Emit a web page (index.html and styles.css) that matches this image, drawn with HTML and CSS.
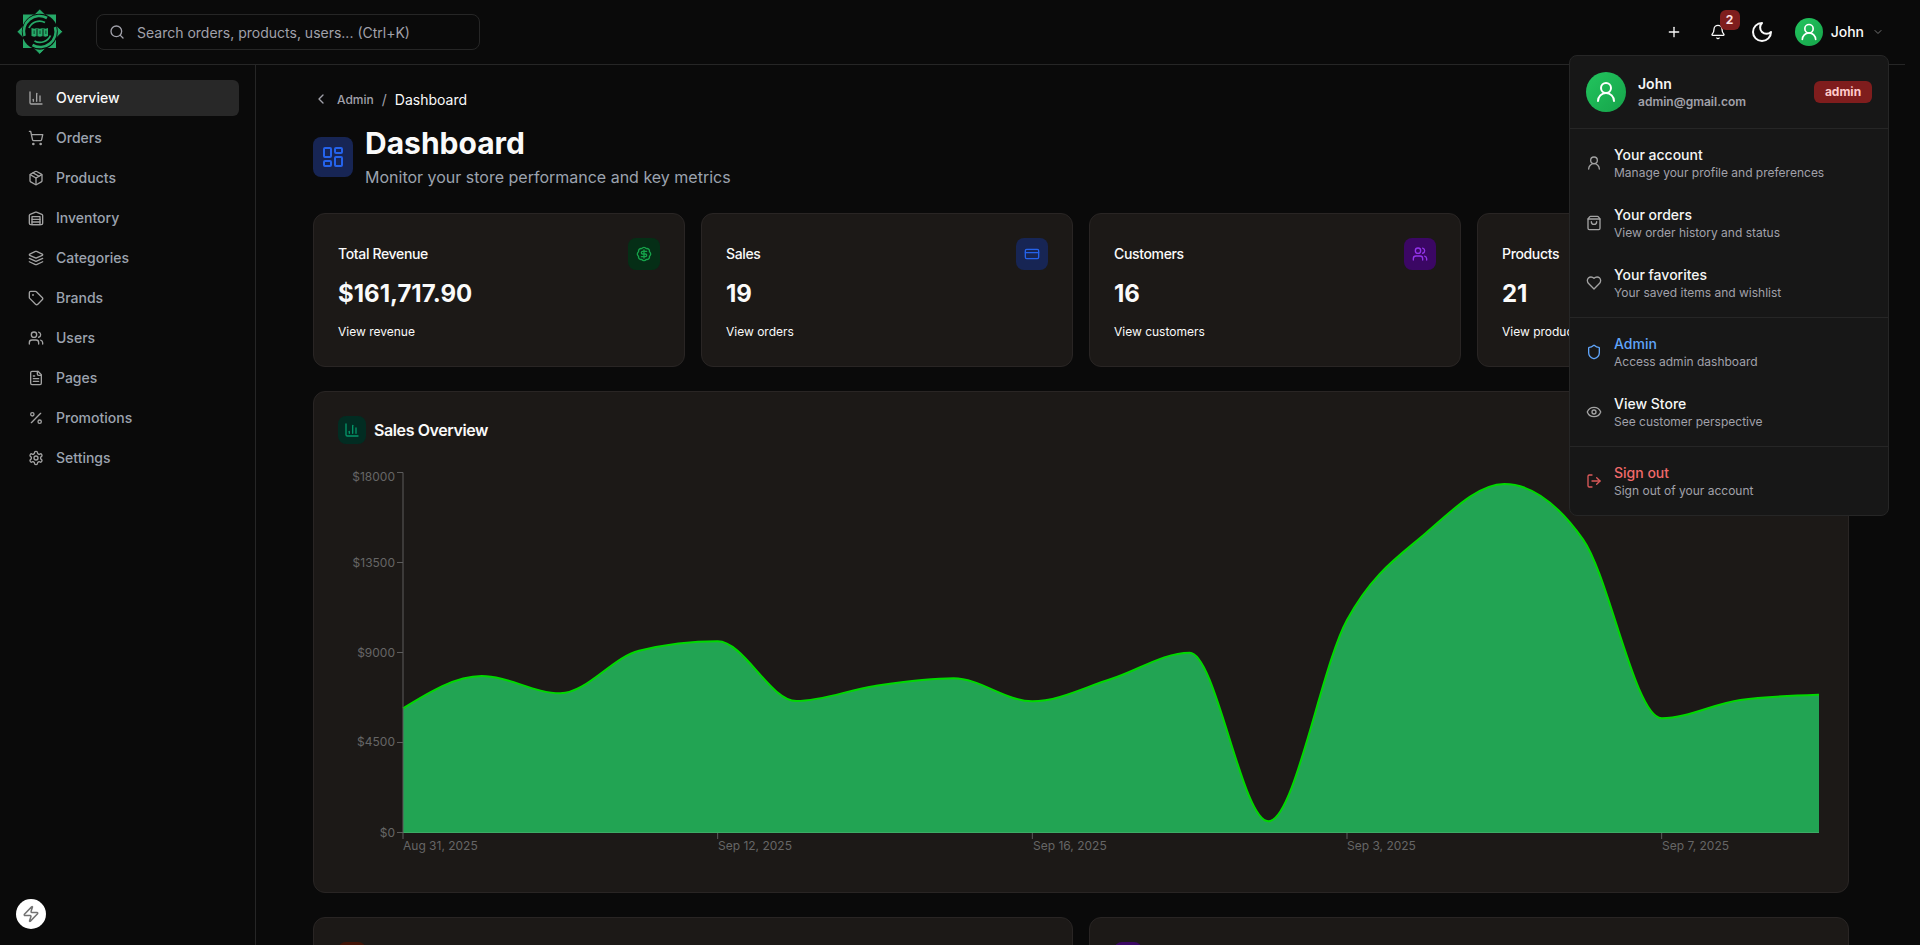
FILE: index.html
```html
<!DOCTYPE html>
<html lang="en">
<head>
    <meta charset="UTF-8">
    <meta name="viewport" content="width=device-width, initial-scale=1.0">
    <title>Dashboard</title>
    <link rel="stylesheet" href="styles.css">
</head>
<body>
    <!-- icon sprite -->
    <svg class="sprite" aria-hidden="true">
        <symbol id="i-chart" viewBox="0 0 24 24"><path d="M3 3v16a2 2 0 0 0 2 2h16"/><path d="M18 17V9"/><path d="M13 17V5"/><path d="M8 17v-3"/></symbol>
        <symbol id="i-cart" viewBox="0 0 24 24"><circle cx="8" cy="21" r="1"/><circle cx="19" cy="21" r="1"/><path d="M2.05 2.05h2l2.66 12.42a2 2 0 0 0 2 1.58h9.78a2 2 0 0 0 1.95-1.57l1.65-7.43H5.12"/></symbol>
        <symbol id="i-package" viewBox="0 0 24 24"><path d="M16.5 9.4 7.55 4.24"/><path d="M21 8a2 2 0 0 0-1-1.73l-7-4a2 2 0 0 0-2 0l-7 4A2 2 0 0 0 3 8v8a2 2 0 0 0 1 1.73l7 4a2 2 0 0 0 2 0l7-4A2 2 0 0 0 21 16Z"/><polyline points="3.29 7 12 12 20.71 7"/><line x1="12" y1="22" x2="12" y2="12"/></symbol>
        <symbol id="i-warehouse" viewBox="0 0 24 24"><path d="M22 8.35V20a2 2 0 0 1-2 2H4a2 2 0 0 1-2-2V8.35A2 2 0 0 1 3.26 6.5l8-3.2a2 2 0 0 1 1.48 0l8 3.2A2 2 0 0 1 22 8.35Z"/><path d="M6 18h12"/><path d="M6 14h12"/><rect x="6" y="10" width="12" height="12"/></symbol>
        <symbol id="i-layers" viewBox="0 0 24 24"><path d="m12.83 2.18a2 2 0 0 0-1.66 0L2.6 6.08a1 1 0 0 0 0 1.83l8.58 3.91a2 2 0 0 0 1.66 0l8.58-3.9a1 1 0 0 0 0-1.83Z"/><path d="m22 17.65-9.17 4.16a2 2 0 0 1-1.66 0L2 17.65"/><path d="m22 12.65-9.17 4.16a2 2 0 0 1-1.66 0L2 12.65"/></symbol>
        <symbol id="i-tag" viewBox="0 0 24 24"><path d="M12.586 2.586A2 2 0 0 0 11.172 2H4a2 2 0 0 0-2 2v7.172a2 2 0 0 0 .586 1.414l8.704 8.704a2.426 2.426 0 0 0 3.42 0l6.58-6.58a2.426 2.426 0 0 0 0-3.42z"/><circle cx="7.5" cy="7.5" r=".5"/></symbol>
        <symbol id="i-users" viewBox="0 0 24 24"><path d="M16 21v-2a4 4 0 0 0-4-4H6a4 4 0 0 0-4 4v2"/><circle cx="9" cy="7" r="4"/><path d="M22 21v-2a4 4 0 0 0-3-3.87"/><path d="M16 3.13a4 4 0 0 1 0 7.75"/></symbol>
        <symbol id="i-file" viewBox="0 0 24 24"><path d="M15 2H6a2 2 0 0 0-2 2v16a2 2 0 0 0 2 2h12a2 2 0 0 0 2-2V7Z"/><path d="M14 2v4a2 2 0 0 0 2 2h4"/><path d="M10 9H8"/><path d="M16 13H8"/><path d="M16 17H8"/></symbol>
        <symbol id="i-percent" viewBox="0 0 24 24"><line x1="19" y1="5" x2="5" y2="19"/><circle cx="6.5" cy="6.5" r="2.5"/><circle cx="17.5" cy="17.5" r="2.5"/></symbol>
        <symbol id="i-settings" viewBox="0 0 24 24"><path d="M12.22 2h-.44a2 2 0 0 0-2 2v.18a2 2 0 0 1-1 1.73l-.43.25a2 2 0 0 1-2 0l-.15-.08a2 2 0 0 0-2.73.73l-.22.38a2 2 0 0 0 .73 2.73l.15.1a2 2 0 0 1 1 1.72v.51a2 2 0 0 1-1 1.74l-.15.09a2 2 0 0 0-.73 2.73l.22.38a2 2 0 0 0 2.73.73l.15-.08a2 2 0 0 1 2 0l.43.25a2 2 0 0 1 1 1.73V20a2 2 0 0 0 2 2h.44a2 2 0 0 0 2-2v-.18a2 2 0 0 1 1-1.73l.43-.25a2 2 0 0 1 2 0l.15.08a2 2 0 0 0 2.73-.73l.22-.39a2 2 0 0 0-.73-2.73l-.15-.08a2 2 0 0 1-1-1.74v-.5a2 2 0 0 1 1-1.74l.15-.09a2 2 0 0 0 .73-2.73l-.22-.38a2 2 0 0 0-2.73-.73l-.15.08a2 2 0 0 1-2 0l-.43-.25a2 2 0 0 1-1-1.73V4a2 2 0 0 0-2-2z"/><circle cx="12" cy="12" r="3"/></symbol>
        <symbol id="i-search" viewBox="0 0 24 24"><circle cx="11" cy="11" r="8"/><path d="m21 21-4.3-4.3"/></symbol>
        <symbol id="i-plus" viewBox="0 0 24 24"><path d="M5 12h14"/><path d="M12 5v14"/></symbol>
        <symbol id="i-bell" viewBox="0 0 24 24"><path d="M10.268 21a2 2 0 0 0 3.464 0"/><path d="M3.262 15.326A1 1 0 0 0 4 17h16a1 1 0 0 0 .74-1.673C19.41 13.956 18 12.499 18 8A6 6 0 0 0 6 8c0 4.499-1.411 5.956-2.738 7.326"/></symbol>
        <symbol id="i-moon" viewBox="0 0 24 24"><path d="M12 3a6 6 0 0 0 9 9 9 9 0 1 1-9-9Z"/></symbol>
        <symbol id="i-user" viewBox="0 0 24 24"><circle cx="12" cy="8" r="5"/><path d="M20 21a8 8 0 0 0-16 0"/></symbol>
        <symbol id="i-bag" viewBox="0 0 24 24"><path d="M16 10a4 4 0 0 1-8 0"/><path d="M3.103 6.034h17.794"/><path d="M3.4 5.467a2 2 0 0 0-.4 1.2V20a2 2 0 0 0 2 2h14a2 2 0 0 0 2-2V6.667a2 2 0 0 0-.4-1.2l-2-2.667A2 2 0 0 0 17 2H7a2 2 0 0 0-1.6.8z"/></symbol>
        <symbol id="i-heart" viewBox="0 0 24 24"><path d="M19 14c1.49-1.46 3-3.21 3-5.5A5.5 5.5 0 0 0 16.5 3c-1.76 0-3 .5-4.5 2-1.5-1.5-2.74-2-4.5-2A5.5 5.5 0 0 0 2 8.5c0 2.3 1.5 4.05 3 5.5l7 7Z"/></symbol>
        <symbol id="i-shield" viewBox="0 0 24 24"><path d="M20 13c0 5-3.5 7.5-7.66 8.95a1 1 0 0 1-.67-.01C7.5 20.5 4 18 4 13V6a1 1 0 0 1 1-1c2 0 4.5-1.2 6.24-2.72a1.17 1.17 0 0 1 1.52 0C14.51 3.81 17 5 19 5a1 1 0 0 1 1 1z"/></symbol>
        <symbol id="i-eye" viewBox="0 0 24 24"><path d="M2.062 12.348a1 1 0 0 1 0-.696 10.75 10.75 0 0 1 19.876 0 1 1 0 0 1 0 .696 10.75 10.75 0 0 1-19.876 0"/><circle cx="12" cy="12" r="3"/></symbol>
        <symbol id="i-logout" viewBox="0 0 24 24"><path d="m16 17 5-5-5-5"/><path d="M21 12H9"/><path d="M9 21H5a2 2 0 0 1-2-2V5a2 2 0 0 1 2-2h4"/></symbol>
        <symbol id="i-dashboard" viewBox="0 0 24 24"><rect x="3" y="3" width="7" height="9" rx="1"/><rect x="14" y="3" width="7" height="5" rx="1"/><rect x="14" y="12" width="7" height="9" rx="1"/><rect x="3" y="16" width="7" height="5" rx="1"/></symbol>
        <symbol id="i-dollar" viewBox="0 0 24 24"><path d="M3.85 8.62a4 4 0 0 1 4.78-4.77 4 4 0 0 1 6.74 0 4 4 0 0 1 4.78 4.78 4 4 0 0 1 0 6.74 4 4 0 0 1-4.77 4.78 4 4 0 0 1-6.75 0 4 4 0 0 1-4.78-4.77 4 4 0 0 1 0-6.76Z"/><path d="M16 8h-6a2 2 0 1 0 0 4h4a2 2 0 1 1 0 4H8"/><path d="M12 18V6"/></symbol>
        <symbol id="i-card" viewBox="0 0 24 24"><rect x="2" y="5" width="20" height="14" rx="2"/><line x1="2" y1="10" x2="22" y2="10"/></symbol>
        <symbol id="i-zap" viewBox="0 0 24 24"><path d="M4 14a1 1 0 0 1-.78-1.63l9.9-10.2a.5.5 0 0 1 .86.46l-1.92 6.02A1 1 0 0 0 13 10h7a1 1 0 0 1 .78 1.63l-9.9 10.2a.5.5 0 0 1-.86-.46l1.92-6.02A1 1 0 0 0 11 14z"/></symbol>
        <symbol id="i-chevron-left" viewBox="0 0 24 24"><path d="m15 18-6-6 6-6"/></symbol>
        <symbol id="i-chevron-down" viewBox="0 0 24 24"><path d="m6 9 6 6 6-6"/></symbol>
    </svg>

    <div class="shell">
        <header class="topbar">
            <svg class="logo" viewBox="0 0 46 46">
                <rect x="6" y="5.5" width="33" height="33.5" fill="#26a968"/>
                <polygon points="22.7,0 45.7,22.7 22.7,45.300 0,22.700" fill="#26a968" stroke="#0a0a0a" stroke-width="0.8"/>
                <circle cx="22.8" cy="22.7" r="18" fill="#0a0a0a"/>
                <path d="M7.500 27a15.500 15.500 0 0 1 22.500-18M38 18a15.500 15.500 0 0 1-22.500 18" fill="none" stroke="#26a968" stroke-width="2.600"/>
                <path d="M12 19a11.500 11.500 0 0 1 16-5.500M33.500 26.500a11.500 11.500 0 0 1-16 5.500" fill="none" stroke="#26a968" stroke-width="1.800"/>
                <path d="M14.500 19l2.700 .8 2.700-.8 3 .8 3-.8 2.700 .8 2.400-.8v8l-2.400 .8-2.700-.8-3 .8-3-.8-2.700 .8-2.700-.8z" fill="#26a968"/>
                <path d="M20 19.500v7.500M26 19.500v7.500" stroke="#0a0a0a" stroke-width="0.9"/>
                <path d="M17.200 21.500v3.500M23 21.500v3.500M28.800 21.500v3.500" stroke="#146b41" stroke-width="1.600"/>
            </svg>
            <div class="search">
                <svg class="icon"><use href="#i-search"/></svg>
                <span>Search orders, products, users... (Ctrl+K)</span>
            </div>
            <div class="topbar-actions">
                <div class="icon-btn"><svg class="icon"><use href="#i-plus"/></svg></div>
                <div class="icon-btn">
                    <svg class="icon"><use href="#i-bell"/></svg>
                    <span class="bell-count">2</span>
                </div>
                <div class="icon-btn"><svg class="icon icon-xl"><use href="#i-moon"/></svg></div>
                <div class="user-btn">
                    <span class="avatar avatar-sm"><svg class="icon icon-lg"><use href="#i-user"/></svg></span>
                    <span class="user-name">John</span>
                    <svg class="icon icon-sm"><use href="#i-chevron-down"/></svg>
                </div>
            </div>
        </header>

        <div class="body-row">
            <aside class="sidebar">
                <nav class="nav">
                    <div class="nav-item active"><svg class="icon"><use href="#i-chart"/></svg>Overview</div>
                    <div class="nav-item"><svg class="icon"><use href="#i-cart"/></svg>Orders</div>
                    <div class="nav-item"><svg class="icon"><use href="#i-package"/></svg>Products</div>
                    <div class="nav-item"><svg class="icon"><use href="#i-warehouse"/></svg>Inventory</div>
                    <div class="nav-item"><svg class="icon"><use href="#i-layers"/></svg>Categories</div>
                    <div class="nav-item"><svg class="icon"><use href="#i-tag"/></svg>Brands</div>
                    <div class="nav-item"><svg class="icon"><use href="#i-users"/></svg>Users</div>
                    <div class="nav-item"><svg class="icon"><use href="#i-file"/></svg>Pages</div>
                    <div class="nav-item"><svg class="icon"><use href="#i-percent"/></svg>Promotions</div>
                    <div class="nav-item"><svg class="icon"><use href="#i-settings"/></svg>Settings</div>
                </nav>
                <div class="fab"><svg class="icon icon-md"><use href="#i-zap"/></svg></div>
            </aside>

            <main class="main">
                <div class="breadcrumb">
                    <svg class="icon"><use href="#i-chevron-left"/></svg>
                    <span class="crumb">Admin</span>
                    <span class="crumb-sep">/</span>
                    <span class="crumb-current">Dashboard</span>
                </div>

                <div class="page-head">
                    <div class="tile tile-page tint-blue"><svg class="icon icon-xl"><use href="#i-dashboard"/></svg></div>
                    <div>
                        <h1 class="page-title">Dashboard</h1>
                        <p class="page-sub">Monitor your store performance and key metrics</p>
                    </div>
                </div>

                <section class="stats">
                    <div class="card stat">
                        <div class="stat-top">
                            <span class="stat-label">Total Revenue</span>
                            <div class="tile tile-stat tint-green"><svg class="icon"><use href="#i-dollar"/></svg></div>
                        </div>
                        <div class="stat-value">$161,717.90</div>
                        <div class="stat-link">View revenue</div>
                    </div>
                    <div class="card stat">
                        <div class="stat-top">
                            <span class="stat-label">Sales</span>
                            <div class="tile tile-stat tint-blue"><svg class="icon"><use href="#i-card"/></svg></div>
                        </div>
                        <div class="stat-value">19</div>
                        <div class="stat-link">View orders</div>
                    </div>
                    <div class="card stat">
                        <div class="stat-top">
                            <span class="stat-label">Customers</span>
                            <div class="tile tile-stat tint-purple"><svg class="icon"><use href="#i-users"/></svg></div>
                        </div>
                        <div class="stat-value">16</div>
                        <div class="stat-link">View customers</div>
                    </div>
                    <div class="card stat">
                        <div class="stat-top">
                            <span class="stat-label">Products</span>
                            <div class="tile tile-stat tint-orange"><svg class="icon"><use href="#i-package"/></svg></div>
                        </div>
                        <div class="stat-value">21</div>
                        <div class="stat-link">View products</div>
                    </div>
                </section>

                <section class="card chart-card">
                    <div class="chart-head">
                        <div class="tile tile-small tint-teal"><svg class="icon"><use href="#i-chart"/></svg></div>
                        <h2 class="chart-title">Sales Overview</h2>
                    </div>
                    <svg class="chart" viewBox="338 460 1486 408">
                        <path class="area" d="M403 708.3C429.2 692.15 455.4 676 481.67 676C507.9 676 534.1 693.3 560.33 693.3C586.6 693.3 612.8 656.97 639 650.7C665.2 644.43 691.4 641.3 717.67 641.3C743.9 641.3 770.1 701 796.33 701C822.6 701 848.8 689.78 875 686C901.2 682.22 927.4 678.3 953.67 678.3C979.9 678.3 1006.1 701.3 1032.33 701.3C1058.6 701.3 1084.8 687.1 1111 679C1137.2 670.9 1163.4 652.7 1189.67 652.7C1215.9 652.7 1242.1 821.3 1268.33 821.3C1294.6 821.3 1320.8 668 1347 620C1373.2 572 1399.4 556 1425.67 533.3C1451.9 510.63 1478.1 484 1504.33 484C1530.6 484 1556.8 502.43 1583 539.3C1609.2 576.17 1635.4 718.3 1661.67 718.3C1687.9 718.3 1714.1 703.53 1740.3 700C1766.6 696.47 1792.8 695.6 1819 694.7L1819 833L403 833Z"/>
                        <path class="area-line" d="M403 708.3C429.2 692.15 455.4 676 481.67 676C507.9 676 534.1 693.3 560.33 693.3C586.6 693.3 612.8 656.97 639 650.7C665.2 644.43 691.4 641.3 717.67 641.3C743.9 641.3 770.1 701 796.33 701C822.6 701 848.8 689.78 875 686C901.2 682.22 927.4 678.3 953.67 678.3C979.9 678.3 1006.1 701.3 1032.33 701.3C1058.6 701.3 1084.8 687.1 1111 679C1137.2 670.9 1163.4 652.7 1189.67 652.7C1215.9 652.7 1242.1 821.3 1268.33 821.3C1294.6 821.3 1320.8 668 1347 620C1373.2 572 1399.4 556 1425.67 533.3C1451.9 510.63 1478.1 484 1504.33 484C1530.6 484 1556.8 502.43 1583 539.3C1609.2 576.17 1635.4 718.3 1661.67 718.3C1687.9 718.3 1714.1 703.53 1740.3 700C1766.6 696.47 1792.8 695.6 1819 694.7"/>
                        <line class="base" x1="403" y1="832.5" x2="1819" y2="832.5"/>
                        <path class="axis" d="M403 472.500V839M397 472.500H403M397 562.500H403M397 652.500H403M397 742.500H403M397 832.500H403M717.670 833V839M1032.330 833V839M1347 833V839M1661.670 833V839"/>
                        <g class="y-labels">
                            <text x="395" y="481">$18000</text>
                            <text x="395" y="567">$13500</text>
                            <text x="395" y="657">$9000</text>
                            <text x="395" y="746">$4500</text>
                            <text x="395" y="837">$0</text>
                        </g>
                        <g class="x-labels">
                            <text x="403" y="850">Aug 31, 2025</text>
                            <text x="718" y="850">Sep 12, 2025</text>
                            <text x="1033" y="850">Sep 16, 2025</text>
                            <text x="1347" y="850">Sep 3, 2025</text>
                            <text x="1662" y="850">Sep 7, 2025</text>
                        </g>
                    </svg>
                </section>

                <section class="lower">
                    <div class="card lower-card"><div class="tile tile-small tint-orange"></div></div>
                    <div class="card lower-card"><div class="tile tile-small tint-purple"></div></div>
                </section>
            </main>
        </div>

        <!-- user dropdown, open -->
        <div class="dropdown">
            <div class="dropdown-head">
                <span class="avatar avatar-lg"><svg class="icon icon-xl"><use href="#i-user"/></svg></span>
                <div class="dropdown-user">
                    <div class="dropdown-name">John</div>
                    <div class="dropdown-email">admin@gmail.com</div>
                </div>
                <span class="role">admin</span>
            </div>
            <div class="menu-group">
                <div class="menu-item">
                    <svg class="icon"><use href="#i-user"/></svg>
                    <div><div class="menu-title">Your account</div><div class="menu-sub">Manage your profile and preferences</div></div>
                </div>
                <div class="menu-item">
                    <svg class="icon"><use href="#i-bag"/></svg>
                    <div><div class="menu-title">Your orders</div><div class="menu-sub">View order history and status</div></div>
                </div>
                <div class="menu-item">
                    <svg class="icon"><use href="#i-heart"/></svg>
                    <div><div class="menu-title">Your favorites</div><div class="menu-sub">Your saved items and wishlist</div></div>
                </div>
            </div>
            <div class="menu-group">
                <div class="menu-item menu-admin">
                    <svg class="icon"><use href="#i-shield"/></svg>
                    <div><div class="menu-title">Admin</div><div class="menu-sub">Access admin dashboard</div></div>
                </div>
                <div class="menu-item">
                    <svg class="icon"><use href="#i-eye"/></svg>
                    <div><div class="menu-title">View Store</div><div class="menu-sub">See customer perspective</div></div>
                </div>
            </div>
            <div class="menu-group">
                <div class="menu-item menu-danger">
                    <svg class="icon"><use href="#i-logout"/></svg>
                    <div><div class="menu-title">Sign out</div><div class="menu-sub">Sign out of your account</div></div>
                </div>
            </div>
        </div>
    </div>
</body>
</html>
```
FILE: styles.css
```css
* {
    margin: 0;
    padding: 0;
    box-sizing: border-box;
}
body {
    font-family: Inter, "Liberation Sans", sans-serif;
    background: #0a0a0a;
    color: #fafafa;
    height: 100vh;
    overflow: hidden;
    padding-right: 15px;
}
.sprite {
    display: none;
}
.icon {
    width: 16px;
    height: 16px;
    flex-shrink: 0;
    fill: none;
    stroke: currentColor;
    stroke-width: 2;
    stroke-linecap: round;
    stroke-linejoin: round;
}
.icon-sm {
    width: 12px;
    height: 12px;
}
.icon-md {
    width: 18px;
    height: 18px;
}
.icon-lg {
    width: 20px;
    height: 20px;
}
.icon-xl {
    width: 24px;
    height: 24px;
}
.shell {
    position: relative;
    height: 100%;
    display: flex;
    flex-direction: column;
}

/* top bar */
.topbar {
    height: 65px;
    flex-shrink: 0;
    display: flex;
    align-items: center;
    padding: 0 16px 1px 17px;
    border-bottom: 1px solid #262626;
}
.logo {
    width: 46px;
    height: 46px;
    margin-right: 33px;
}
.search {
    width: 384px;
    height: 36px;
    display: flex;
    align-items: center;
    gap: 12px;
    padding: 2px 12px 0;
    border: 1px solid #262626;
    border-radius: 8px;
    font-size: 14px;
    color: #a1a1aa;
}
.search .icon {
    color: #a1a1aa;
    margin-top: -2px;
}
.topbar-actions {
    margin-left: auto;
    display: flex;
    align-items: center;
    gap: 8px;
}
.icon-btn {
    position: relative;
    width: 36px;
    height: 36px;
    display: flex;
    align-items: center;
    justify-content: center;
}
.bell-count {
    position: absolute;
    top: -4px;
    right: -4px;
    width: 20px;
    height: 20px;
    border-radius: 6px;
    background: #7f1d1d;
    color: #fee2e2;
    font-size: 12px;
    font-weight: 700;
    line-height: 20px;
    text-align: center;
}
.user-btn {
    display: flex;
    align-items: center;
    padding: 0 5px 0 7px;
}
.user-btn .icon-sm {
    color: #737373;
    margin-left: 8px;
}
.user-name {
    margin-left: 8px;
    font-size: 14px;
    font-weight: 500;
}
.avatar {
    display: flex;
    align-items: center;
    justify-content: center;
    border-radius: 50%;
    background: linear-gradient(135deg, #22c55e, #16a34a);
    color: #fff;
    flex-shrink: 0;
}
.avatar-sm {
    width: 28px;
    height: 28px;
}
.avatar-lg {
    width: 40px;
    height: 40px;
}

/* sidebar */
.body-row {
    flex: 1;
    min-height: 0;
    display: flex;
}
.sidebar {
    position: relative;
    width: 256px;
    flex-shrink: 0;
    border-right: 1px solid #262626;
    padding: 15px 16px;
}
.nav {
    display: flex;
    flex-direction: column;
    gap: 4px;
}
.nav-item {
    height: 36px;
    display: flex;
    align-items: center;
    gap: 12px;
    padding: 0 12px 1px;
    border-radius: 6px;
    font-size: 14px;
    font-weight: 500;
    color: #9ca3af;
}
.nav-item .icon {
    color: #a3a3a3;
}
.nav-item.active {
    background: #282828;
    color: #fafafa;
}
.fab {
    position: absolute;
    left: 16px;
    bottom: 16px;
    width: 30px;
    height: 30px;
    display: flex;
    align-items: center;
    justify-content: center;
    border-radius: 50%;
    background: #fff;
    color: #737373;
}

/* main column */
.main {
    flex: 1;
    min-width: 0;
    overflow: hidden;
    padding: 24px 56px 0 57px;
}
.breadcrumb {
    height: 20px;
    display: flex;
    align-items: center;
    color: #a1a1aa;
    margin-bottom: 16px;
}
.crumb {
    margin-left: 8px;
    font-size: 12px;
    font-weight: 500;
}
.crumb-sep {
    margin: 0 8px;
    font-size: 14px;
}
.crumb-current {
    font-size: 14px;
    color: #fafafa;
}
.page-head {
    display: flex;
    align-items: center;
    gap: 12px;
    margin-bottom: 24px;
}
.page-title {
    font-size: 30px;
    line-height: 36px;
    font-weight: 700;
    margin-bottom: 4px;
}
.page-sub {
    font-size: 16px;
    line-height: 24px;
    color: #9ca3af;
}
.tile {
    display: flex;
    align-items: center;
    justify-content: center;
    border-radius: 8px;
    flex-shrink: 0;
}
.tile-page {
    width: 40px;
    height: 40px;
}
.tile-stat {
    width: 32px;
    height: 32px;
}
.tile-small {
    width: 28px;
    height: 28px;
}
.tint-blue {
    background: #172554;
    color: #2563eb;
}
.tint-green {
    background: #052e16;
    color: #16a34a;
}
.tint-purple {
    background: #3b0764;
    color: #9333ea;
}
.tint-orange {
    background: #431407;
    color: #ea580c;
}
.tint-teal {
    background: #022c22;
    color: #059669;
}
.card {
    background: #1c1917;
    border: 1px solid #292524;
    border-radius: 12px;
    padding: 24px;
}

/* stat cards */
.stats {
    display: grid;
    grid-template-columns: repeat(4, 1fr);
    gap: 16px;
    margin-bottom: 24px;
}
.stat-top {
    display: flex;
    align-items: center;
    justify-content: space-between;
}
.stat-label {
    font-size: 14px;
    font-weight: 500;
    letter-spacing: -0.025em;
    margin-bottom: 2px;
}
.stat-value {
    font-size: 24px;
    line-height: 32px;
    font-weight: 700;
    margin-top: 8px;
}
.stat-link {
    font-size: 12px;
    line-height: 20px;
    margin-top: 12px;
}

/* sales chart */
.chart-card {
    margin-bottom: 24px;
}
.chart-head {
    display: flex;
    align-items: center;
    gap: 8px;
    margin-bottom: 16px;
}
.chart-title {
    font-size: 16px;
    font-weight: 600;
    letter-spacing: -0.025em;
}
.chart {
    display: block;
    width: 1486px;
    height: 408px;
}
.area {
    fill: #22a453;
}
.area-line {
    fill: none;
    stroke: #00d900;
    stroke-width: 2;
}
.base {
    stroke: #3cab66;
    stroke-width: 1;
}
.axis {
    fill: none;
    stroke: #5c5c5c;
    stroke-width: 1;
}
.y-labels text,
.x-labels text {
    font-size: 12px;
    fill: #666;
}
.y-labels text {
    text-anchor: end;
}

/* lower cards, cut by the window */
.lower {
    display: grid;
    grid-template-columns: 1fr 1fr;
    gap: 16px;
}
.lower-card {
    height: 320px;
}

/* user dropdown */
.dropdown {
    position: absolute;
    top: 55px;
    right: 16px;
    width: 320px;
    background: #171717;
    border: 1px solid #262626;
    border-radius: 8px;
}
.dropdown-head {
    display: flex;
    align-items: center;
    gap: 12px;
    padding: 16px;
}
.dropdown-user {
    flex: 1;
    min-width: 0;
}
.dropdown-name {
    font-size: 14px;
    line-height: 20px;
    font-weight: 600;
    color: #f5f5f5;
}
.dropdown-email {
    font-size: 12px;
    line-height: 16px;
    font-weight: 600;
    color: #a1a1aa;
}
.role {
    width: 58px;
    height: 22px;
    border-radius: 6px;
    background: #7f1d1d;
    color: #fecaca;
    font-size: 12px;
    font-weight: 700;
    line-height: 22px;
    text-align: center;
}
.menu-group {
    border-top: 1px solid #262626;
    padding: 4px 0;
}
.menu-item {
    height: 60px;
    display: flex;
    align-items: center;
    gap: 12px;
    padding: 0 16px;
}
.menu-item .icon {
    color: #a3a3a3;
}
.menu-title {
    font-size: 14px;
    line-height: 20px;
    font-weight: 500;
    color: #f5f5f5;
}
.menu-sub {
    font-size: 12px;
    line-height: 16px;
    color: #a1a1aa;
}
.menu-admin .icon,
.menu-admin .menu-title {
    color: #60a5fa;
}
.menu-danger .menu-title {
    color: #f06a6a;
}
.menu-danger .icon {
    color: #dc5a5a;
}
```
